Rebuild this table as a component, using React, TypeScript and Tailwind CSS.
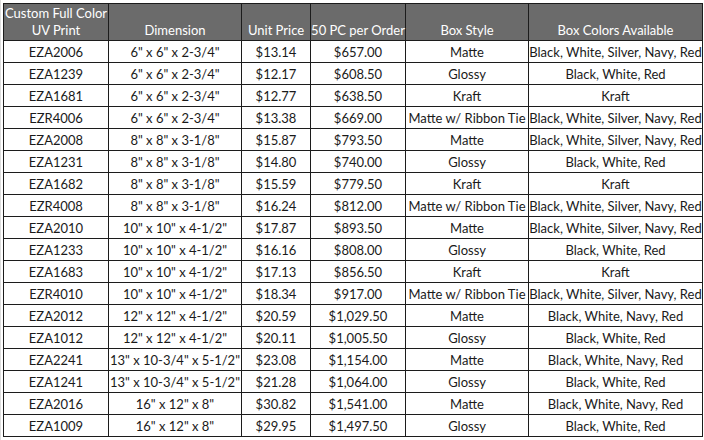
const rows: [string, string, string, string, string, string][] = [
  ["EZA2006", '6" x 6" x 2-3/4"', "$13.14", "$657.00", "Matte", "Black, White, Silver, Navy, Red"],
  ["EZA1239", '6" x 6" x 2-3/4"', "$12.17", "$608.50", "Glossy", "Black, White, Red"],
  ["EZA1681", '6" x 6" x 2-3/4"', "$12.77", "$638.50", "Kraft", "Kraft"],
  ["EZR4006", '6" x 6" x 2-3/4"', "$13.38", "$669.00", "Matte w/ Ribbon Tie", "Black, White, Silver, Navy, Red"],
  ["EZA2008", '8" x 8" x 3-1/8"', "$15.87", "$793.50", "Matte", "Black, White, Silver, Navy, Red"],
  ["EZA1231", '8" x 8" x 3-1/8"', "$14.80", "$740.00", "Glossy", "Black, White, Red"],
  ["EZA1682", '8" x 8" x 3-1/8"', "$15.59", "$779.50", "Kraft", "Kraft"],
  ["EZR4008", '8" x 8" x 3-1/8"', "$16.24", "$812.00", "Matte w/ Ribbon Tie", "Black, White, Silver, Navy, Red"],
  ["EZA2010", '10" x 10" x 4-1/2"', "$17.87", "$893.50", "Matte", "Black, White, Silver, Navy, Red"],
  ["EZA1233", '10" x 10" x 4-1/2"', "$16.16", "$808.00", "Glossy", "Black, White, Red"],
  ["EZA1683", '10" x 10" x 4-1/2"', "$17.13", "$856.50", "Kraft", "Kraft"],
  ["EZR4010", '10" x 10" x 4-1/2"', "$18.34", "$917.00", "Matte w/ Ribbon Tie", "Black, White, Silver, Navy, Red"],
  ["EZA2012", '12" x 12" x 4-1/2"', "$20.59", "$1,029.50", "Matte", "Black, White, Navy, Red"],
  ["EZA1012", '12" x 12" x 4-1/2"', "$20.11", "$1,005.50", "Glossy", "Black, White, Red"],
  ["EZA2241", '13" x 10-3/4" x 5-1/2"', "$23.08", "$1,154.00", "Matte", "Black, White, Navy, Red"],
  ["EZA1241", '13" x 10-3/4" x 5-1/2"', "$21.28", "$1,064.00", "Glossy", "Black, White, Red"],
  ["EZA2016", '16" x 12" x 8"', "$30.82", "$1,541.00", "Matte", "Black, White, Navy, Red"],
  ["EZA1009", '16" x 12" x 8"', "$29.95", "$1,497.50", "Glossy", "Black, White, Red"],
];

const cell = "border border-[#1c1c1c] text-center whitespace-nowrap p-0";
const head = `${cell} font-normal align-bottom pb-[1px] leading-[17px]`;

export default function App() {
  return (
    <div className="w-[704px] h-[440px] bg-white overflow-hidden pl-[2px] pt-[3px] border-l border-[#dedede] font-['Lato','Liberation_Sans',sans-serif] text-[13px]">
      <table className="border-collapse table-fixed w-[699px]">
        <colgroup>
          <col className="w-[105px]" />
          <col className="w-[133px]" />
          <col className="w-[69px]" />
          <col className="w-[95px]" />
          <col className="w-[123px]" />
          <col className="w-[174px]" />
        </colgroup>
        <thead>
          <tr className="h-[37px] bg-[#6b6b6b] text-white">
            <th className={head}>
              Custom Full Color
              <br />
              UV Print
            </th>
            <th className={head}>Dimension</th>
            <th className={head}>Unit Price</th>
            <th className={head}>50 PC per Order</th>
            <th className={head}>Box Style</th>
            <th className={head}>Box Colors Available</th>
          </tr>
        </thead>
        <tbody className="text-[#1a1a1a]">
          {rows.map((r) => (
            <tr key={r[0]} className="h-[22px]">
              {r.map((v, i) => (
                <td key={i} className={`${cell} align-middle leading-none pt-[1px]`}>
                  {v}
                </td>
              ))}
            </tr>
          ))}
        </tbody>
      </table>
    </div>
  );
}
